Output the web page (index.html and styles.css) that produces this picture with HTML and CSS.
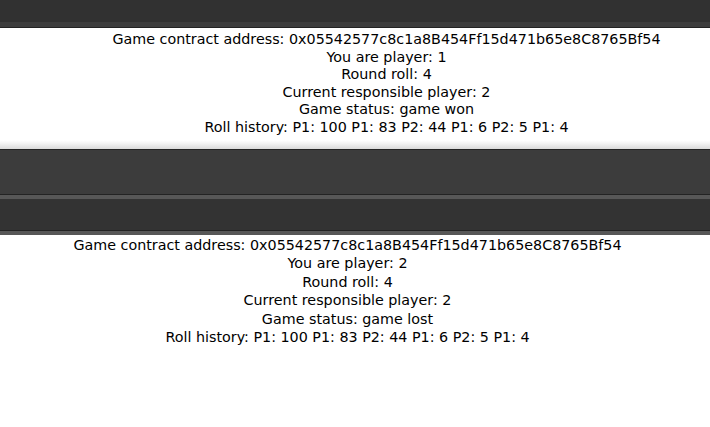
FILE: index.html
```html
<!DOCTYPE html>
<html>
<head>
<meta charset="utf-8">
<link rel="stylesheet" href="styles.css">
</head>
<body>
<section class="window window-top">
  <div class="titlebar"></div>
  <div class="titlebar-band"></div>
  <div class="edge"></div>
  <div class="page page-top">
    <div class="info">
      <div>Game contract address: 0x05542577c8c1a8B454Ff15d471b65e8C8765Bf54</div>
      <div>You are player: 1</div>
      <div>Round roll: 4</div>
      <div>Current responsible player: 2</div>
      <div>Game status: game won</div>
      <div>Roll history: P1: 100 P1: 83 P2: 44 P1: 6 P2: 5 P1: 4</div>
    </div>
  </div>
  <div class="page-shadow"></div>
</section>
<section class="window window-bottom">
  <div class="edge"></div>
  <div class="dock"></div>
  <div class="edge"></div>
  <div class="band"></div>
  <div class="titlebar2"></div>
  <div class="edge"></div>
  <div class="band"></div>
  <div class="page page-bottom">
    <div class="info">
      <div>Game contract address: 0x05542577c8c1a8B454Ff15d471b65e8C8765Bf54</div>
      <div>You are player: 2</div>
      <div>Round roll: 4</div>
      <div>Current responsible player: 2</div>
      <div>Game status: game lost</div>
      <div>Roll history: P1: 100 P1: 83 P2: 44 P1: 6 P2: 5 P1: 4</div>
    </div>
  </div>
</section>
</body>
</html>
```
FILE: styles.css
```css
html, body {
  margin: 0;
  padding: 0;
  background: #ffffff;
}
body {
  font-family: "DejaVu Sans", "Open Sans", sans-serif;
  font-size: 14.3px;
  color: #000000;
  overflow: hidden;
}
.window {
  display: flex;
  flex-direction: column;
}
.titlebar {
  height: 22px;
  background: #313131;
}
.titlebar-band {
  height: 5px;
  background: #3d3d3d;
}
.edge {
  height: 1px;
  background: #232323;
}
.page {
  background: #ffffff;
  text-align: center;
  white-space: nowrap;
}
.page-top {
  height: 112px;
  box-sizing: border-box;
  padding: 3px 0 0 63px;
  line-height: 17.6px;
}
.page-shadow {
  height: 9px;
  background: linear-gradient(#ffffff, #f2f2f2 40%, #d9d9d9);
}
.dock {
  height: 44px;
  background: #3c3c3c;
}
.band {
  height: 4px;
  background: #575757;
}
.titlebar2 {
  height: 31px;
  background: #333333;
}
.page-bottom {
  padding: 1px 15px 0 0;
  line-height: 18.4px;
  min-height: 192px;
}
```
